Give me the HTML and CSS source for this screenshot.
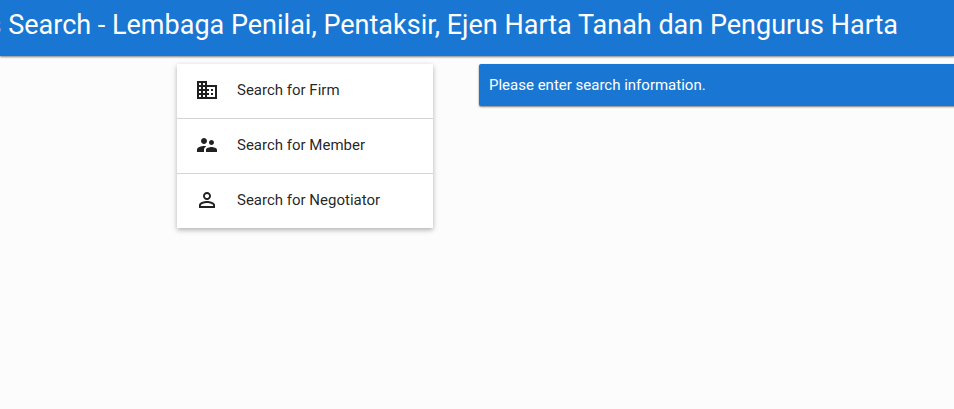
FILE: index.html
```html
<!DOCTYPE html>
<html lang="en">
<head>
<meta charset="utf-8">
<title>Search</title>
<link rel="stylesheet" href="styles.css">
</head>
<body>
<header class="toolbar"><h1 class="title">Members Search - Lembaga Penilai, Pentaksir, Ejen Harta Tanah dan Pengurus Harta</h1></header>
<main class="content">
  <nav class="card">
    <a class="item">
      <svg class="icon" viewBox="0 0 24 24"><path d="M12 7V3H2v18h20V7H12zM6 19H4v-2h2v2zm0-4H4v-2h2v2zm0-4H4V9h2v2zm0-4H4V5h2v2zm4 12H8v-2h2v2zm0-4H8v-2h2v2zm0-4H8V9h2v2zm0-4H8V5h2v2zm10 12h-8v-2h2v-2h-2v-2h2v-2h-2V9h8v10zm-2-8h-2v2h2v-2zm0 4h-2v2h2v-2z"/></svg>
      <span>Search for Firm</span>
    </a>
    <a class="item">
      <svg class="icon" viewBox="0 0 24 24"><path d="M16.5 12c1.38 0 2.49-1.12 2.49-2.5S17.88 7 16.5 7 14 8.12 14 9.5s1.12 2.5 2.5 2.5zM9 11c1.66 0 2.99-1.34 2.99-3S10.66 5 9 5 6 6.34 6 8s1.34 3 3 3zm7.500 3c-1.830 0-5.500.920-5.500 2.750V19h11v-2.250c0-1.830-3.670-2.750-5.500-2.750zM9 13c-2.330 0-7 1.170-7 3.500V19h7v-2.250c0-.850.330-2.340 2.370-3.470C10.500 13.100 9.660 13 9 13z"/></svg>
      <span>Search for Member</span>
    </a>
    <a class="item">
      <svg class="icon" viewBox="0 0 24 24"><path d="M12 5.900c1.160 0 2.100.940 2.100 2.100s-.940 2.100-2.100 2.100S9.900 9.160 9.900 8s.940-2.100 2.100-2.100m0 9c2.970 0 6.100 1.460 6.100 2.100v1.100H5.900V17c0-.640 3.130-2.100 6.100-2.100M12 4C9.790 4 8 5.790 8 8s1.790 4 4 4 4-1.790 4-4-1.790-4-4-4zm0 9c-2.670 0-8 1.340-8 4v3h16v-3c0-2.660-5.330-4-8-4z"/></svg>
      <span>Search for Negotiator</span>
    </a>
  </nav>
  <div class="alert">Please enter search information.</div>
</main>
</body>
</html>
```
FILE: styles.css
```css
html, body {
  margin: 0;
  height: 100%;
  overflow: hidden;
}
body {
  background: #fcfcfc;
  font-family: Roboto, sans-serif;
  color: rgba(0, 0, 0, 0.87);
}
.toolbar {
  height: 56px;
  background: #1976d2;
  color: #fff;
  display: flex;
  align-items: flex-start;
  justify-content: flex-end;
  padding-right: 56px;
  overflow: hidden;
  box-shadow: 0 1px 2px rgba(0,0,0,.5);
}
.title {
  margin: 0;
  font-size: 27px;
  font-weight: 400;
  line-height: 50px;
  white-space: nowrap;
  flex: none;
}
.content {
  display: flex;
  align-items: flex-start;
  padding: 8px 0 0 177px;
  gap: 46px;
}
.card {
  width: 256px;
  flex: none;
  background: #fff;
  box-shadow: 0 2px 5px rgba(0,0,0,.3);
  display: flex;
  flex-direction: column;
}
.item {
  height: 54px;
  display: flex;
  align-items: center;
  padding: 0 0 2px 18px;
  box-sizing: border-box;
  gap: 18px;
  font-size: 15px;
}
.item + .item {
  border-top: 1px solid #d4d4d4;
  height: 55px;
}
.icon {
  width: 24px;
  height: 24px;
  fill: rgba(0, 0, 0, 0.87);
  flex: none;
}
.alert {
  flex: none;
  width: 600px;
  height: 42px;
  box-sizing: border-box;
  padding: 0 10px;
  line-height: 42px;
  font-size: 15px;
  color: #fff;
  background: #1976d2;
  border-radius: 2px;
  box-shadow: 0 1px 2px rgba(0,0,0,.5);
}
```
